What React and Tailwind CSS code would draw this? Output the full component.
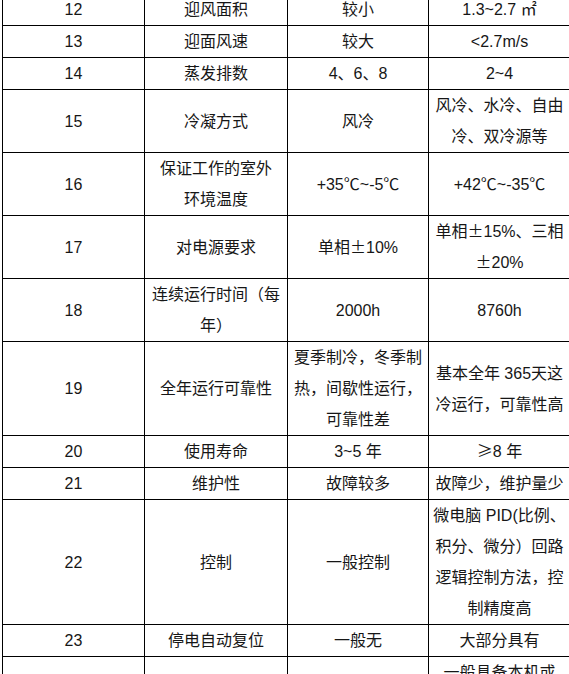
import React from "react";

const rows = [
  ["12", ["迎风面积"], ["较小"], ["1.3~2.7 ㎡"]],
  ["13", ["迎面风速"], ["较大"], ["<2.7m/s"]],
  ["14", ["蒸发排数"], ["4、6、8"], ["2~4"]],
  ["15", ["冷凝方式"], ["风冷"], ["风冷、水冷、自由", "冷、双冷源等"]],
  ["16", ["保证工作的室外", "环境温度"], ["+35℃~-5℃"], ["+42℃~-35℃"]],
  ["17", ["对电源要求"], ["单相±10%"], ["单相±15%、三相", "±20%"]],
  ["18", ["连续运行时间（每", "年）"], ["2000h"], ["8760h"]],
  ["19", ["全年运行可靠性"], ["夏季制冷，冬季制", "热，间歇性运行，", "可靠性差"], ["基本全年 365天这", "冷运行，可靠性高"]],
  ["20", ["使用寿命"], ["3~5 年"], ["≥8 年"]],
  ["21", ["维护性"], ["故障较多"], ["故障少，维护量少"]],
  ["22", ["控制"], ["一般控制"], ["微电脑 PID(比例、", "积分、微分）回路", "逻辑控制方法，控", "制精度高"]],
  ["23", ["停电自动复位"], ["一般无"], ["大部分具有"]],
];

function Rich({ text }) {
  const parts = text.split(/([±℃≥])/);
  return (
    <>
      {parts.map((p, i) =>
        /^[±℃≥]$/.test(p) ? (
          <span
            key={i}
            className="leading-none"
            style={{ fontFamily: '"Noto Sans CJK SC", sans-serif' }}
          >
            {p}
          </span>
        ) : (
          <React.Fragment key={i}>{p}</React.Fragment>
        )
      )}
    </>
  );
}

function Cell({ lines }) {
  return (
    <td className="border border-black text-center align-middle p-0">
      {lines.map((l, i) => (
        <div key={i} className="whitespace-nowrap h-[31px]">
          <Rich text={l} />
        </div>
      ))}
    </td>
  );
}

export default function App() {
  return (
    <div
      className="w-[569px] h-[674px] overflow-hidden bg-white text-[#161616] text-[16px] leading-[31px]"
      style={{ fontFamily: '"Liberation Sans", Arial, "Noto Sans CJK SC", sans-serif' }}
    >
      <table className="table-fixed border-collapse ml-[2px] mt-[-7px] w-[568px]">
        <colgroup>
          <col className="w-[142px]" />
          <col className="w-[143px]" />
          <col className="w-[141px]" />
          <col className="w-[142px]" />
        </colgroup>
        <tbody>
          {rows.map((r) => (
            <tr key={r[0]}>
              <td className="border border-black text-center align-middle p-0">{r[0]}</td>
              <Cell lines={r[1]} />
              <Cell lines={r[2]} />
              <Cell lines={r[3]} />
            </tr>
          ))}
          <tr>
            <td className="border border-black p-0 h-[93px]"></td>
            <td className="border border-black p-0"></td>
            <td className="border border-black p-0"></td>
            <td className="border border-black text-center align-top p-0">
              <div className="whitespace-nowrap">一般具备本机或</div>
            </td>
          </tr>
        </tbody>
      </table>
    </div>
  );
}
